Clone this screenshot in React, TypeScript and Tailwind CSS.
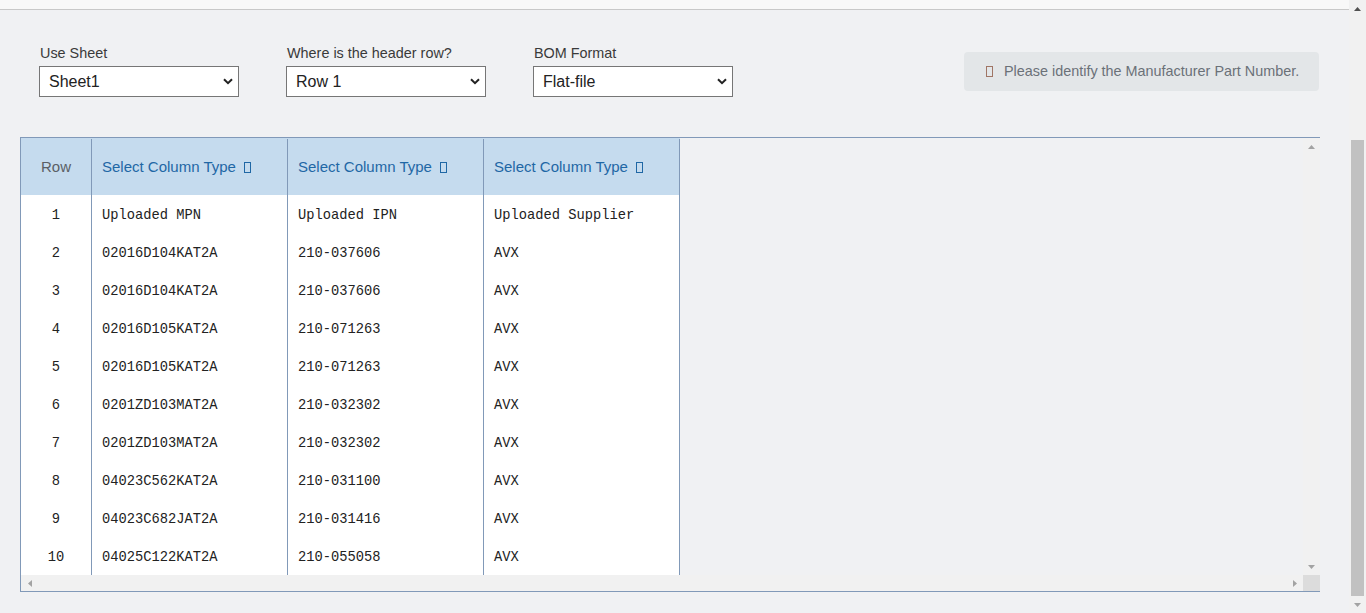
import React from "react";

const rows: [string, string, string][] = [
  ["Uploaded MPN", "Uploaded IPN", "Uploaded Supplier"],
  ["02016D104KAT2A", "210-037606", "AVX"],
  ["02016D104KAT2A", "210-037606", "AVX"],
  ["02016D105KAT2A", "210-071263", "AVX"],
  ["02016D105KAT2A", "210-071263", "AVX"],
  ["0201ZD103MAT2A", "210-032302", "AVX"],
  ["0201ZD103MAT2A", "210-032302", "AVX"],
  ["04023C562KAT2A", "210-031100", "AVX"],
  ["04023C682JAT2A", "210-031416", "AVX"],
  ["04025C122KAT2A", "210-055058", "AVX"],
];

function Tri({ dir, color = "#a3a3a3" }: { dir: "up" | "down" | "left" | "right"; color?: string }) {
  const pts =
    dir === "up"
      ? "0,4 3.5,0 7,4"
      : dir === "down"
      ? "0,0 7,0 3.5,4"
      : dir === "left"
      ? "4,0 4,7 0,3.5"
      : "0,0 0,7 4,3.5";
  const w = dir === "up" || dir === "down" ? 7 : 4;
  const h = dir === "up" || dir === "down" ? 4 : 7;
  return (
    <svg width={w} height={h} viewBox={`0 0 ${w} ${h}`} className="block">
      <polygon points={pts} fill={color} />
    </svg>
  );
}

function Chevron() {
  return (
    <svg width="10" height="7" viewBox="0 0 10 7" className="block">
      <path d="M1 1.2 L5 5.2 L9 1.2" fill="none" stroke="#222" strokeWidth="2" />
    </svg>
  );
}

function Field({ label, value }: { label: string; value: string }) {
  return (
    <div className="flex w-[200px] flex-col">
      <div className="h-[20px] pl-[1px] text-[14.4px] leading-[20px] text-[#3a3a3a]">{label}</div>
      <div className="mt-[3px] flex h-[31px] items-center justify-between border border-[#767676] bg-white pl-[9px] pr-[5px] text-[16px] text-[#222]">
        <span>{value}</span>
        <Chevron />
      </div>
    </div>
  );
}

function Tofu({ className }: { className: string }) {
  return <span className={`inline-block h-[11px] w-[7px] border ${className}`} />;
}

export default function App() {
  return (
    <div className="flex h-[613px] w-[1366px] overflow-hidden bg-[#f0f1f3] font-['Liberation_Sans',Arial,sans-serif]">
      <div className="flex min-w-0 flex-1 flex-col">
        <div className="h-[10px] border-b border-[#c8c8c8] bg-[#f8f8f8]" />
        <div className="pl-[20px] pr-[29px] pt-[33px]">
          <div className="flex items-start pl-[19px]">
            <div className="flex gap-[47px]">
              <Field label="Use Sheet" value="Sheet1" />
              <Field label="Where is the header row?" value="Row 1" />
              <Field label="BOM Format" value="Flat-file" />
            </div>
            <div className="ml-auto mr-[1px] mt-[9px] flex h-[39px] w-[355px] items-center rounded-[4px] bg-[#e3e6e8] pl-[22px] text-[14.4px] text-[#6b7178]">
              <Tofu className="border-[#a07565]" />
              <span className="ml-[11px] whitespace-nowrap">Please identify the Manufacturer Part Number.</span>
            </div>
          </div>

          <div className="mt-[40px] flex h-[455px] flex-col border-b border-l border-t border-[#8199b8]">
            <div className="flex min-h-0 flex-1">
              <div className="flex flex-1">
                <div className="flex flex-col">
                  <div className="flex h-[57px] bg-[#c5dbee] pt-[1px] text-[15px]">
                    <div className="flex w-[71px] items-center justify-center border-r border-[#8199b8] text-[#5a5f66]">
                      Row
                    </div>
                    {[0, 1, 2].map((i) => (
                      <div
                        key={i}
                        className="flex w-[196px] items-center gap-[8px] border-r border-[#8199b8] pl-[10px] text-[#1f67a5]"
                      >
                        <span className="whitespace-nowrap">Select Column Type</span>
                        <Tofu className="border-[#1f67a5]" />
                      </div>
                    ))}
                  </div>
                  <div className="flex flex-1 flex-col bg-white font-['Liberation_Mono',monospace] text-[13.75px] text-[#222]">
                    {rows.map((r, idx) => (
                      <div key={idx} className="flex h-[38px]">
                        <div className="flex w-[71px] items-center justify-center border-r border-[#8199b8] pt-[4px]">
                          {idx + 1}
                        </div>
                        {r.map((c, j) => (
                          <div
                            key={j}
                            className="flex w-[196px] items-center whitespace-nowrap border-r border-[#8199b8] pl-[10px] pt-[4px]"
                          >
                            {c}
                          </div>
                        ))}
                      </div>
                    ))}
                  </div>
                </div>
              </div>
              <div className="flex w-[17px] flex-col items-center justify-between bg-[#f1f1f1] pb-[6px] pt-[7px]">
                <Tri dir="up" />
                <Tri dir="down" />
              </div>
            </div>
            <div className="flex h-[16px]">
              <div className="flex flex-1 items-center justify-between bg-[#f1f1f1] pl-[7px] pr-[6px]">
                <Tri dir="left" />
                <Tri dir="right" />
              </div>
              <div className="w-[17px] bg-[#dcdcdc]" />
            </div>
          </div>
        </div>
      </div>
      <div className="flex w-[17px] flex-col bg-[#f1f1f1]">
        <div className="flex h-[17px] items-center justify-center">
          <Tri dir="up" color="#505050" />
        </div>
        <div className="flex flex-1 flex-col px-[2px] pt-[123px]">
          <div className="h-[456px] bg-[#c1c1c1]" />
        </div>
        <div className="flex h-[17px] items-center justify-center">
          <Tri dir="down" color="#a3a3a3" />
        </div>
      </div>
    </div>
  );
}
